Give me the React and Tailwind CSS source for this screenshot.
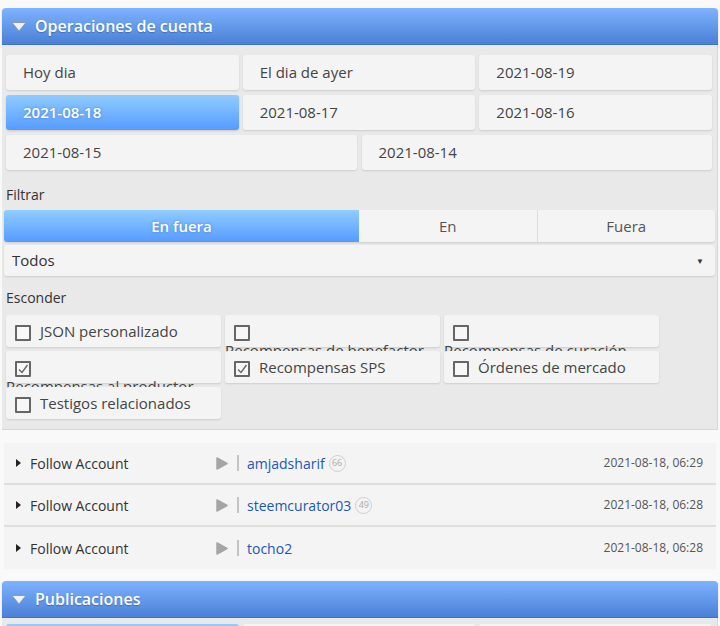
import React from "react";

const font = { fontFamily: '"Open Sans", "Noto Sans", sans-serif' };

function PanelHeader({ title }) {
  return (
    <div className="flex h-[37px] items-center rounded-t-[4px] border-b border-[#3f72c9] bg-gradient-to-b from-[#7fb3ff] to-[#4a80d6] pl-[9px] shadow-[0_1px_2px_rgba(0,0,0,0.2)]">
      <svg width="16" height="11" viewBox="0 0 16 11">
        <polygon points="1,1.5 15,1.5 8,10" fill="#f2f2f2" stroke="#8a9ab5" strokeWidth="1" strokeLinejoin="round" />
      </svg>
      <span className="ml-[8px] text-[16px] font-semibold text-white [text-shadow:0_1px_1px_rgba(0,0,0,0.25)]">
        {title}
      </span>
    </div>
  );
}

function DateButton({ label, active }) {
  return (
    <div
      className={
        active
          ? "flex h-[35px] items-center rounded-[3px] bg-gradient-to-b from-[#90ccff] to-[#569bff] pl-[17px] text-[15px] font-semibold text-white shadow-[0_1px_2px_rgba(0,0,0,0.15)] [text-shadow:0_0_3px_rgba(0,40,120,0.35)]"
          : "flex h-[35px] items-center rounded-[3px] bg-[#f4f4f4] pl-[17px] text-[15px] text-[#444] shadow-[0_1px_2px_rgba(0,0,0,0.12)]"
      }
    >
      {label}
    </div>
  );
}

function Box({ checked }) {
  return (
    <span className="mx-[9px] inline-flex h-[16px] w-[16px] items-center justify-center rounded-[1px] border-2 border-[#666] bg-[#f7f7f7] align-middle">
      {checked && (
        <svg width="12" height="12" viewBox="0 0 12 12">
          <path d="M2 6.5 L5 9.5 L10.5 2" fill="none" stroke="#666" strokeWidth="1.4" />
        </svg>
      )}
    </span>
  );
}

function HideItem({ label, checked }) {
  return (
    <label className="block h-[32px] w-[215px] rounded-[3px] bg-[#f4f4f4] pt-[7px] text-[15px] leading-[18px] text-[#444] shadow-[0_1px_2px_rgba(0,0,0,0.12)]">
      <Box checked={checked} />
      <span className="inline-block whitespace-nowrap">{label}</span>
    </label>
  );
}

function Rep({ value }) {
  return (
    <span className="ml-[4px] inline-flex h-[17px] w-[17px] items-center justify-center rounded-full border border-[#cfcfcf] text-[9px] text-[#aaa]">
      {value}
    </span>
  );
}

function OpRow({ user, rep, date, last }) {
  return (
    <div className={`flex h-[42px] items-center bg-[#f4f4f4] ${last ? "" : "border-b-2 border-[#dedede]"}`}>
      <svg className="ml-[12px]" width="5" height="8" viewBox="0 0 5 8">
        <polygon points="0,0 5,4 0,8" fill="#222" />
      </svg>
      <span className="ml-[9px] w-[186px] text-[14px] font-medium text-[#333]">Follow Account</span>
      <svg width="12" height="13" viewBox="0 0 12 13">
        <polygon points="1,1 11,6.5 1,12" fill="#a5a5a5" stroke="#a5a5a5" strokeWidth="1.5" strokeLinejoin="round" />
      </svg>
      <span className="ml-[9px] h-[16px] w-[2px] bg-[#c4c4c4]" />
      <a className="ml-[8px] text-[14px] text-[#2057b8]">{user}</a>
      {rep && <Rep value={rep} />}
      <span className="ml-auto pr-[13px] text-[12px] text-[#555]">{date}</span>
    </div>
  );
}

export default function App() {
  const hide = [
    { label: "JSON personalizado", checked: false },
    { label: "Recompensas de benefactor", checked: false },
    { label: "Recompensas de curación", checked: false },
    { label: "Recompensas al productor", checked: true },
    { label: "Recompensas SPS", checked: true },
    { label: "Órdenes de mercado", checked: false },
    { label: "Testigos relacionados", checked: false },
  ];

  return (
    <div className="h-[626px] overflow-hidden bg-[#f9f9f9] px-[2px] pt-[8px]" style={font}>
      <PanelHeader title="Operaciones de cuenta" />

      <div className="border-r border-b border-[#d6d6d6] bg-[#e9e9e9] px-[2px] pt-[10px] pb-[10px]">
        <div className="pl-[2px] pr-[3px]">
          <div className="grid grid-cols-3 gap-x-[4px] gap-y-[5px]">
            <DateButton label="Hoy dia" />
            <DateButton label="El dia de ayer" />
            <DateButton label="2021-08-19" />
            <DateButton label="2021-08-18" active />
            <DateButton label="2021-08-17" />
            <DateButton label="2021-08-16" />
          </div>
          <div className="mt-[5px] grid grid-cols-2 gap-x-[5px]">
            <DateButton label="2021-08-15" />
            <DateButton label="2021-08-14" />
          </div>
        </div>

        <div className="mt-[15px] pl-[2px] text-[14px] leading-[20px] text-[#333]">Filtrar</div>
        <div className="mt-[5px] flex h-[32px] rounded-[3px] bg-[#f4f4f4] text-[15px] shadow-[0_1px_2px_rgba(0,0,0,0.12)]">
          <div className="flex w-[355px] items-center justify-center rounded-l-[3px] bg-gradient-to-b from-[#90ccff] to-[#569bff] font-semibold text-white [text-shadow:0_0_3px_rgba(0,40,120,0.35)]">
            En fuera
          </div>
          <div className="flex flex-1 items-center justify-center border-r border-[#dcdcdc] text-[#555]">En</div>
          <div className="flex flex-1 items-center justify-center text-[#555]">Fuera</div>
        </div>
        <div className="mt-[3px] flex h-[31px] items-center rounded-[3px] bg-[#f4f4f4] pl-[8px] pr-[11px] text-[15px] text-[#333] shadow-[0_1px_2px_rgba(0,0,0,0.12)]">
          <span>Todos</span>
          <span className="ml-auto text-[8px] text-[#333]">▼</span>
        </div>

        <div className="mt-[12px] pl-[2px] text-[14px] leading-[20px] text-[#333]">Esconder</div>
        <div className="mt-[7px] grid grid-cols-[215px_215px_215px] gap-[4px] pl-[2px]">
          {hide.map((h) => (
            <HideItem key={h.label} label={h.label} checked={h.checked} />
          ))}
        </div>
      </div>

      <div className="mt-[13px] px-[2px]">
        <OpRow user="amjadsharif" rep="66" date="2021-08-18, 06:29" />
        <OpRow user="steemcurator03" rep="49" date="2021-08-18, 06:28" />
        <OpRow user="tocho2" date="2021-08-18, 06:28" last />
      </div>

      <div className="mt-[12px]">
        <PanelHeader title="Publicaciones" />
        <div className="border-r border-[#d6d6d6] bg-[#e9e9e9] px-[2px] pt-[6px] pb-[10px]">
          <div className="grid grid-cols-3 gap-x-[4px] pl-[2px] pr-[3px]">
            <DateButton label="Hoy dia" active />
            <DateButton label="El dia de ayer" />
            <DateButton label="2021-08-19" />
          </div>
        </div>
      </div>
    </div>
  );
}
